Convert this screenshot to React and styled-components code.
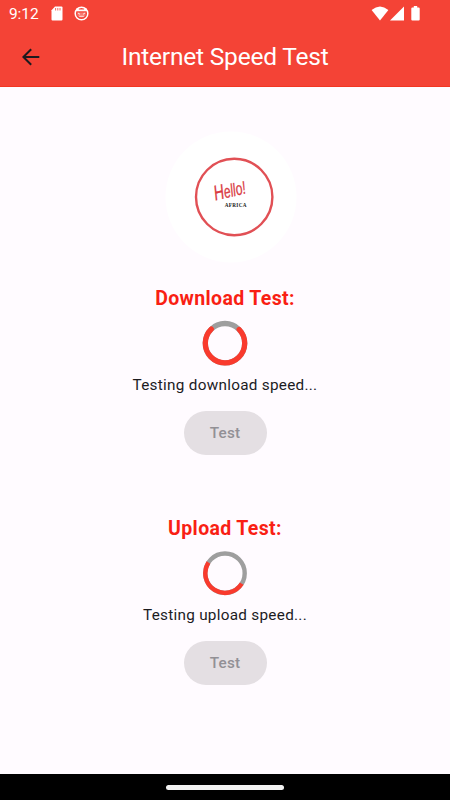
import React from 'react'
import styled, { createGlobalStyle } from 'styled-components'

const GlobalStyle = createGlobalStyle`
    *{
        box-sizing: border-box;
    }

    body{
        margin: 0;
        background: #fffbff;
        font-family: Roboto, "Liberation Sans", sans-serif;
    }
`

// start and sweep are in degrees, clockwise from the top
const Spinner = ({ start, sweep, stroke, rounded }) => {
  const radius = 19.7
  const length = 2 * Math.PI * radius
  return (
    <Ring viewBox='0 0 46 46'>
        <circle cx='23' cy='23.2' r={radius} fill='none' stroke='#9e9e9e' strokeWidth={stroke} />
        <circle cx='23' cy='23.2' r={radius} fill='none' stroke='#f93a2d' strokeWidth={stroke}
            strokeLinecap={rounded ? 'round' : 'butt'}
            strokeDasharray={`${length * sweep / 360} ${length}`}
            transform={`rotate(${start - 90} 23 23.2)`} />
    </Ring>
  )
}

const SpeedTest = ({ title, message, spinner }) => {
  return (
    <Test>
        <h2>{title}</h2>
        <Spinner {...spinner} />
        <p>{message}</p>
        <button disabled>Test</button>
    </Test>
  )
}

const App = () => {
  return (
    <Screen>
        <GlobalStyle />
        <Header>
            <StatusBar>
                <span className='time'>9:12</span>
                <svg className='sd' width='12' height='15' viewBox='0 0 12 15'>
                    <path d='M4 .5h6.5Q11.5.5 11.5 1.5v12q0 1-1 1h-9q-1 0-1-1V4.2z' fill='#fff' />
                    <path d='M4.6 2v2.5M6.8 2v2.5M9 2v2.5' stroke='#f44336' strokeWidth='.8' />
                </svg>
                <svg className='debug' width='15' height='15' viewBox='0 0 15 15'>
                    <circle cx='7.5' cy='7.5' r='6.3' fill='none' stroke='#fff' strokeWidth='1.5' />
                    <path d='M2 3l1.6-1.2L5 3.4h5l1.4-1.6L13 3v2.3H2z' fill='#fff' />
                    <path d='M3 6.5h9l-.8 3.7Q7.5 13 3.8 10.2z' fill='#fff' opacity='.3' />
                    <path d='M4 7l2 1.3M11 7L9 8.3M5.2 10.3h4.6' stroke='#fff' strokeWidth='.8' />
                </svg>
                <svg className='wifi' width='18' height='15' viewBox='0 0 18 15'>
                    <path d='M.6 4Q9-3.2 17.4 4L9 14.4z' fill='#fff' />
                </svg>
                <svg className='signal' width='14' height='15' viewBox='0 0 14 15'>
                    <path d='M14 .4v14H0z' fill='#fff' />
                </svg>
                <svg className='battery' width='9' height='15' viewBox='0 0 9 15'>
                    <path d='M2.8 0h3.4v1.5h1.5q1 0 1 1v11q0 1-1 1H1.3q-1 0-1-1v-11q0-1 1-1h1.5z' fill='#fff' />
                </svg>
            </StatusBar>
            <Toolbar>
                <svg width='18' height='18' viewBox='0 0 18 18'>
                    <path d='M17.3 9H1.5M9.2 1.2L1.4 9l7.8 7.8' fill='none' stroke='#1c1b1f' strokeWidth='2' />
                </svg>
                <h1>Internet Speed Test</h1>
            </Toolbar>
        </Header>
        <Main>
            <Logo viewBox='0 0 132 132'>
                <circle cx='66' cy='66' r='65.5' fill='#fff' />
                <circle cx='69.2' cy='66' r='38.2' fill='none' stroke='#e15055' strokeWidth='2.4' />
                <text className='hello' x='0' y='0' textLength='32' lengthAdjust='spacingAndGlyphs'
                    transform='translate(50.5 69.5) rotate(-13)'>
                    <tspan className='initial'>H</tspan>ello!
                </text>
                <text className='africa' x='59.8' y='76'>AFRICA</text>
            </Logo>
            <SpeedTest title='Download Test:' message='Testing download speed...'
                spinner={{ start: 46, sweep: 268, stroke: 5.3, rounded: true }} />
            <SpeedTest title='Upload Test:' message='Testing upload speed...'
                spinner={{ start: 122, sweep: 180, stroke: 4.4 }} />
        </Main>
        <NavBar>
            <span />
        </NavBar>
    </Screen>
  )
}

const Screen = styled.div`
    width: 100%;
    height: 800px;
    display: flex;
    flex-direction: column;
    overflow: hidden;
    background: #fffbff;
`

const Header = styled.header`
    height: 87px;
    flex-shrink: 0;
    background: #f44336;
    border-bottom: 1px solid #f23622;
`

const StatusBar = styled.div`
    height: 27px;
    display: flex;
    align-items: center;
    padding: 0 30px 0 9px;
    color: #fff;

    .time{
        width: 42px;
        padding-top: 1px;
        font-size: 15.5px;
        line-height: 26px;
        letter-spacing: -.1px;
    }

    .debug{
        margin-left: 11px;
    }

    .wifi{
        margin-left: auto;
    }

    .signal{
        margin-left: 1px;
    }

    .battery{
        margin-left: 7px;
    }
`

const Toolbar = styled.div`
    height: 60px;
    display: grid;
    grid-template-columns: 40px 1fr 40px;
    align-items: center;

    svg{
        margin-left: 22px;
    }

    h1{
        margin: 0;
        padding-bottom: 1px;
        color: #fff;
        font-size: 24.5px;
        font-weight: 400;
        line-height: 30px;
        letter-spacing: -.2px;
        text-align: center;
        white-space: nowrap;
    }
`

const Main = styled.main`
    flex: 1;
    display: flex;
    flex-direction: column;
    align-items: center;
    padding-top: 44px;
`

const Logo = styled.svg`
    width: 132px;
    height: 132px;
    margin-left: 12px;
    margin-bottom: 22px;

    .hello{
        font-family: "Liberation Sans Narrow", "Liberation Sans", sans-serif;
        font-size: 18px;
        font-style: italic;
        fill: #d93a42;
        stroke: #d93a42;
        stroke-width: .3px;
    }

    .initial{
        font-size: 21px;
    }

    .africa{
        font-family: "Liberation Serif", serif;
        font-size: 5.2px;
        font-weight: 700;
        letter-spacing: .3px;
        fill: #222;
    }
`

const Test = styled.section`
    width: 100%;
    height: 230px;
    display: flex;
    flex-direction: column;
    align-items: center;

    h2{
        margin: 0;
        color: #f91f14;
        font-size: 19.5px;
        font-weight: 700;
        line-height: 28px;
        letter-spacing: .35px;
    }

    p{
        margin: 9px 0 15px;
        color: #1c1b1f;
        font-size: 15.3px;
        line-height: 21px;
        letter-spacing: .28px;
    }

    button{
        width: 83px;
        height: 44px;
        padding: 0;
        border: none;
        border-radius: 22px;
        background: #e4dfe3;
        color: #929095;
        font-family: inherit;
        font-size: 15.3px;
        font-weight: 500;
        line-height: 45px;
        letter-spacing: .2px;
    }
`

const Ring = styled.svg`
    width: 46px;
    height: 46px;
    margin-top: 7px;
`

const NavBar = styled.footer`
    height: 26px;
    flex-shrink: 0;
    display: flex;
    align-items: center;
    justify-content: center;
    background: #000;

    span{
        width: 118px;
        height: 5px;
        border-radius: 2.5px;
        background: #f2f2f2;
    }
`

export default App
